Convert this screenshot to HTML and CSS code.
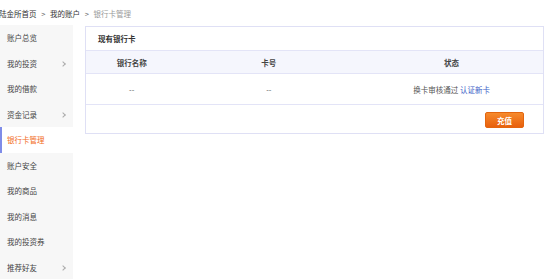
FILE: index.html
```html
<!DOCTYPE html>
<html lang="zh-CN">

<head>
  <meta charset="UTF-8">
  <title>银行卡管理</title>
  <link rel="stylesheet" href="styles.css">
</head>

<body>
  <div class="crumbs">
    <a href="#">陆金所首页</a>
    <span class="sep">&gt;</span>
    <a href="#">我的账户</a>
    <span class="sep">&gt;</span>
    <span class="current">银行卡管理</span>
  </div>

  <div class="wrap">
    <ul class="side">
      <li>账户总览</li>
      <li class="more">我的投资</li>
      <li>我的借款</li>
      <li class="more">资金记录</li>
      <li class="active">银行卡管理</li>
      <li>账户安全</li>
      <li>我的商品</li>
      <li>我的消息</li>
      <li>我的投资券</li>
      <li class="more">推荐好友</li>
    </ul>

    <div class="panel">
      <div class="panel-title">现有银行卡</div>
      <table class="cards">
        <thead>
          <tr>
            <th class="c1">银行名称</th>
            <th class="c2">卡号</th>
            <th class="c3">状态</th>
          </tr>
        </thead>
        <tbody>
          <tr>
            <td>--</td>
            <td>--</td>
            <td>换卡审核通过 <a href="#">认证新卡</a></td>
          </tr>
        </tbody>
      </table>
      <div class="panel-foot">
        <button class="btn-orange">充值</button>
      </div>
    </div>
  </div>
</body>

</html>
```

FILE: styles.css
```css
* {
  box-sizing: border-box;
}

html {
  font-family: "Microsoft YaHei", "Noto Sans CJK SC", sans-serif;
  font-size: 7.5px;
  color: #333;
  background: #fff;
}

body {
  margin: 0;
  overflow: hidden;
}

a {
  color: #333;
  text-decoration: none;
}

.crumbs {
  height: 25px;
  line-height: 27px;
  margin-left: -1px;
  white-space: nowrap;
}

.crumbs .sep {
  color: #666;
  margin: 0 3px;
}

.crumbs .current {
  color: #999;
}

.wrap {
  display: flex;
  align-items: flex-start;
  gap: 12px;
}

.side {
  list-style: none;
  margin: 0;
  padding: 0;
  width: 73px;
  background: #f7f7f7;
  flex-shrink: 0;
}

.side li {
  height: 25.5px;
  line-height: 25.5px;
  padding-left: 7px;
  color: #444;
  position: relative;
}

.side li.more::after {
  content: "";
  position: absolute;
  right: 8px;
  top: 11px;
  width: 3px;
  height: 3px;
  border-top: 1px solid #aaa;
  border-right: 1px solid #aaa;
  transform: rotate(45deg);
}

.side li.active {
  background: #fff;
  color: #f26b22;
  border-left: 2px solid #7f8ce8;
  padding-left: 5px;
}

.panel {
  margin-top: 1px;
  width: 459px;
  border: 1px solid #dfe0f5;
}

.panel-title {
  height: 23px;
  line-height: 23px;
  padding-left: 12px;
  font-weight: bold;
  color: #333;
}

.cards {
  width: 100%;
  border-collapse: collapse;
  table-layout: fixed;
}

.cards th {
  height: 23px;
  background: #f5f6fd;
  border-top: 1px solid #e3e4f7;
  border-bottom: 1px solid #e3e4f7;
  font-weight: bold;
  color: #444;
}

.cards td {
  height: 31px;
  text-align: center;
  color: #555;
  border-bottom: 1px solid #e3e4f7;
}

.cards .c1 {
  width: 20%;
}

.cards .c2 {
  width: 40%;
}

.cards td a {
  color: #3a60c7;
}

.panel-foot {
  display: flex;
  justify-content: flex-end;
  padding: 7px 19px 5px;
}

.btn-orange {
  width: 39px;
  height: 16px;
  padding: 0;
  border: 1px solid #e3650f;
  border-radius: 2px;
  background: linear-gradient(#f68a2c, #e8600d);
  color: #fff;
  font-family: inherit;
  font-size: 7.5px;
  font-weight: bold;
  cursor: pointer;
}
```
